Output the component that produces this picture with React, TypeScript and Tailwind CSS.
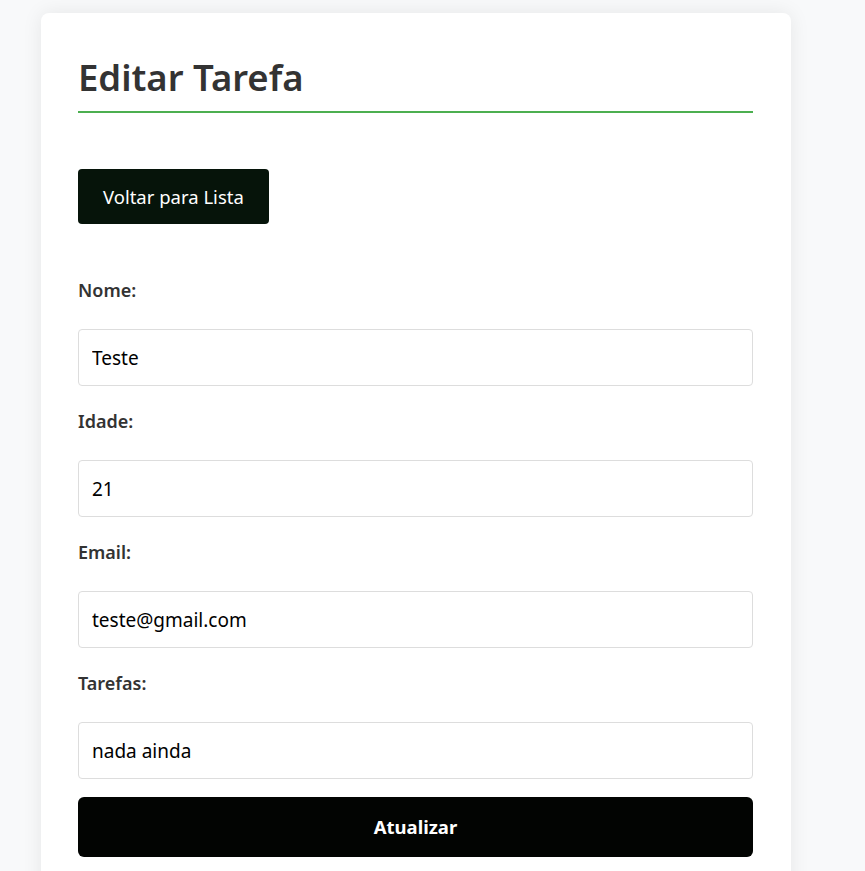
import { useState } from 'react';

const fields = [
  { id: 'nome', label: 'Nome:', value: 'Teste' },
  { id: 'idade', label: 'Idade:', value: '21' },
  { id: 'email', label: 'Email:', value: 'teste@gmail.com' },
  { id: 'tarefas', label: 'Tarefas:', value: 'nada ainda' },
];

export default function App() {
  const [values, setValues] = useState<Record<string, string>>(
    Object.fromEntries(fields.map((f) => [f.id, f.value]))
  );

  return (
    <div
      className="min-h-[871px] bg-[#f8f9fa] pt-[13px] pl-[41px]"
      style={{ fontFamily: '"Noto Sans", "Open Sans", sans-serif' }}
    >
      <div className="w-[750px] bg-white rounded-lg shadow-[0_0_20px_rgba(0,0,0,0.08)] pl-[37px] pr-[38px] pt-[40px] pb-[40px]">
        {/* título */}
        <h1 className="text-[36.5px] leading-[48px] font-semibold text-[#333] pb-[10px] border-b-2 border-[#4caf50]">
          Editar Tarefa
        </h1>

        <button className="mt-[56px] h-[55px] px-[25px] rounded bg-[#06140a] text-white text-[18.5px]">
          Voltar para Lista
        </button>

        <form className="mt-[53px]" onSubmit={(e) => e.preventDefault()}>
          {fields.map((f) => (
            <div key={f.id}>
              <label htmlFor={f.id} className="block text-[18px] leading-[27px] font-semibold text-[#333] mb-[25px]">
                {f.label}
              </label>
              <input
                id={f.id}
                type="text"
                value={values[f.id]}
                onChange={(e) => setValues({ ...values, [f.id]: e.target.value })}
                className="block w-full h-[57px] px-[13px] border border-[#ddd] rounded text-[19px] text-black mb-[22px] focus:outline-none"
              />
            </div>
          ))}
          <button
            type="submit"
            className="block w-full h-[60px] -mt-[4px] rounded-md bg-[#020402] text-white text-[18.5px] font-bold"
          >
            Atualizar
          </button>
        </form>
      </div>
    </div>
  );
}
